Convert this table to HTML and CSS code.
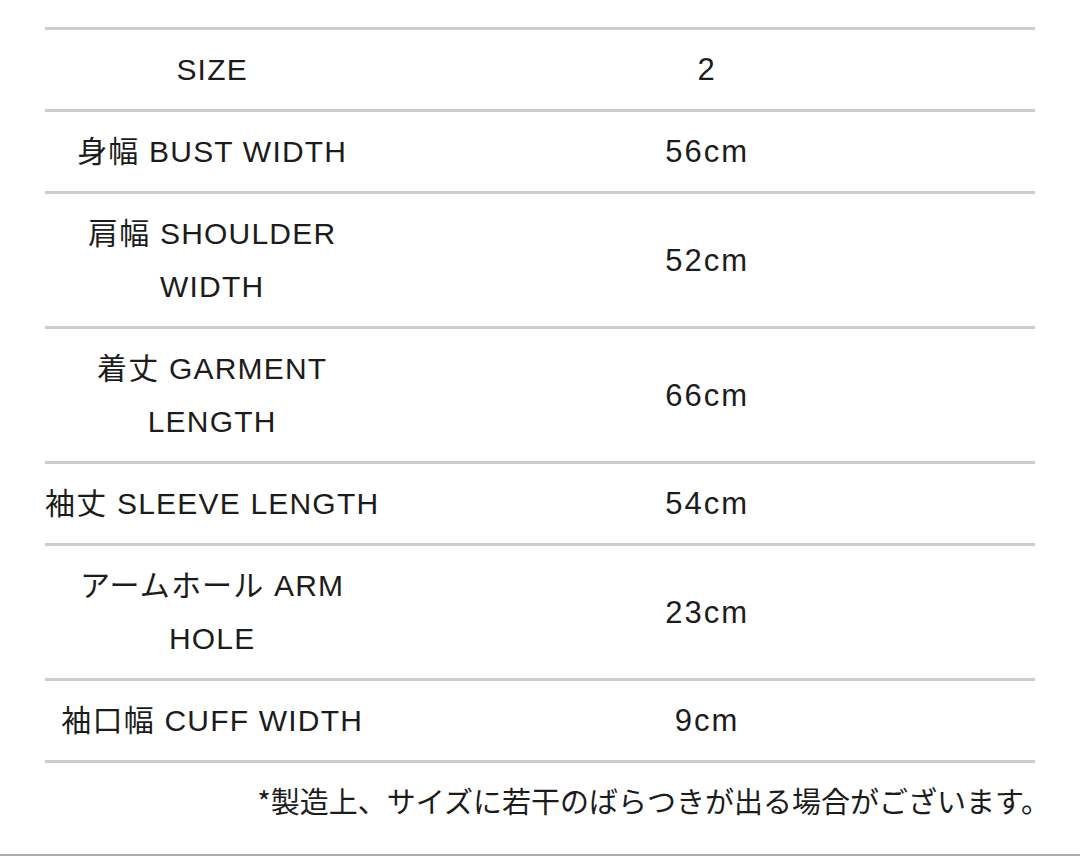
FILE: index.html
```html
<!DOCTYPE html>
<html lang="ja">
<head>
<meta charset="utf-8">
<title>Size</title>
<link rel="stylesheet" href="styles.css">
</head>
<body>
<div class="page">
  <table class="size-table">
    <tbody>
      <tr><td class="label">SIZE</td><td class="value">2</td></tr>
      <tr><td class="label">身幅 BUST WIDTH</td><td class="value">56cm</td></tr>
      <tr><td class="label">肩幅 SHOULDER<br>WIDTH</td><td class="value">52cm</td></tr>
      <tr><td class="label">着丈 GARMENT<br>LENGTH</td><td class="value">66cm</td></tr>
      <tr><td class="label">袖丈 SLEEVE LENGTH</td><td class="value">54cm</td></tr>
      <tr><td class="label">アームホール ARM<br>HOLE</td><td class="value">23cm</td></tr>
      <tr><td class="label">袖口幅 CUFF WIDTH</td><td class="value">9cm</td></tr>
    </tbody>
  </table>
  <div class="note-row"><p class="note">*製造上、サイズに若干のばらつきが出る場合がございます。</p></div>
</div>
</body>
</html>
```
FILE: styles.css
```css
html, body {
  margin: 0;
  padding: 0;
  background: #fff;
}
.page {
  width: 1080px;
  height: 856px;
  box-sizing: border-box;
  padding: 27px 45px 0;
  border-bottom: 2px solid #ababab;
  font-family: "Liberation Sans", "Noto Sans CJK JP", sans-serif;
  color: #1c1c1c;
  overflow: hidden;
}
.size-table {
  width: 990px;
  border-collapse: collapse;
  border-top: 3px solid #cdcdcd;
}
.size-table td {
  border-bottom: 3px solid #cdcdcd;
  padding: 13px 0;
  font-size: 30px;
  line-height: 53px;
  text-align: center;
  vertical-align: middle;
  white-space: nowrap;
}
.size-table td.label {
  width: 334px;
  letter-spacing: 1.2px;
}
.size-table td.value {
  font-size: 31px;
  letter-spacing: 2px;
}
.note-row {
  display: flex;
  justify-content: flex-end;
  margin-right: -15px;
}
.note {
  margin: 19px 0 0;
  font-family: "Noto Sans CJK JP", sans-serif;
  font-size: 29px;
  line-height: 36px;
  color: #1c1c1c;
  white-space: nowrap;
}
```
